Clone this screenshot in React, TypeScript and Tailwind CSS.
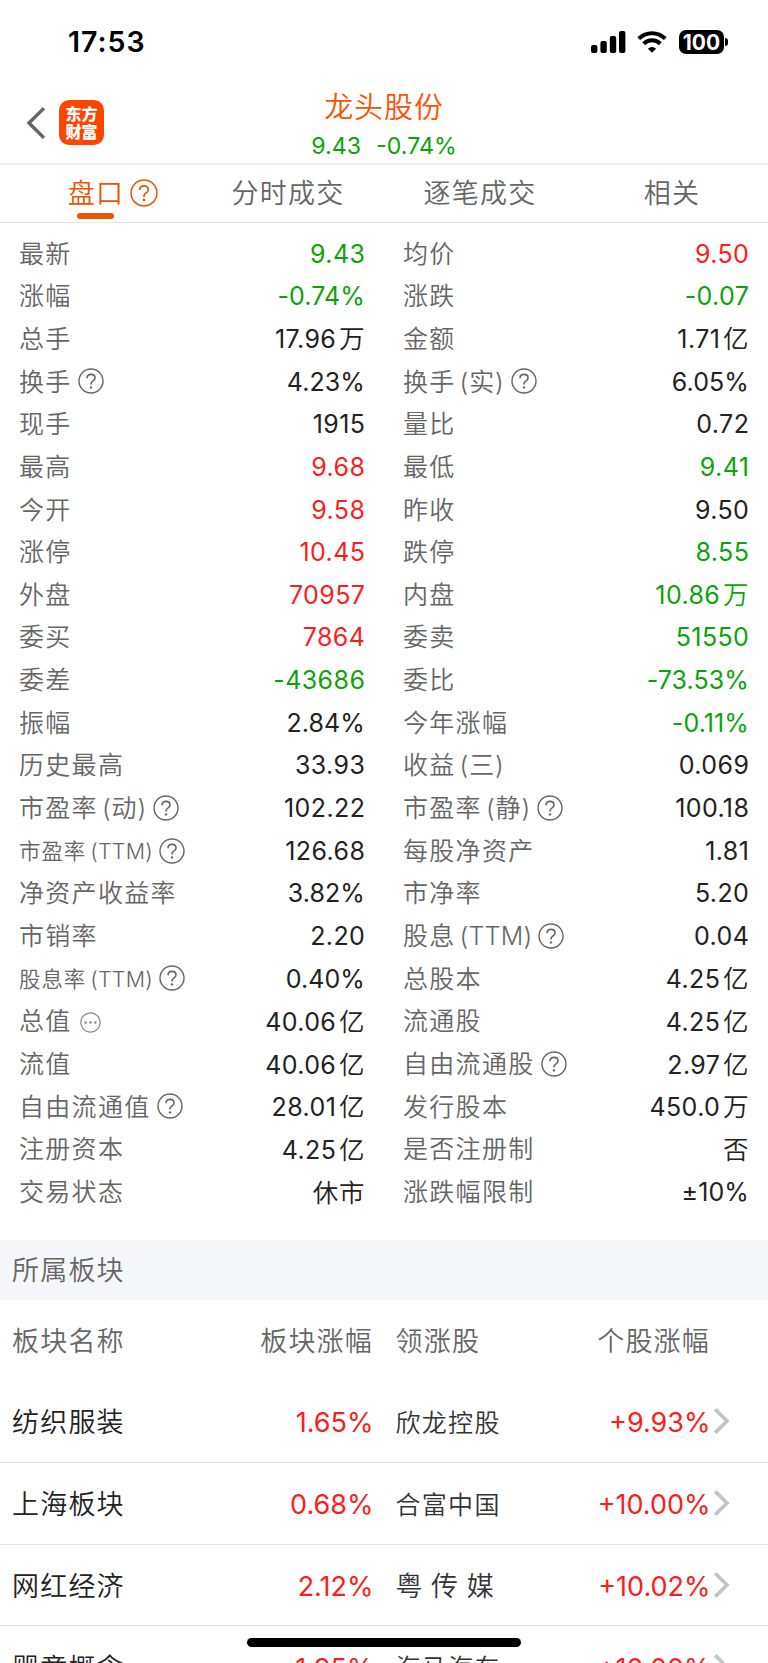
import { clsx } from 'clsx';

type Tone = 'up' | 'down' | 'flat';

interface Quote {
  label: string;
  value: string;
  unit?: string;
  tone?: Tone;
  suffix?: string;
  help?: boolean;
  more?: boolean;
  small?: boolean;
}

interface Sector {
  name: string;
  change: string;
  leader: string;
  leaderChange: string;
  spaced?: boolean;
}

const toneClass: Record<Tone, string> = {
  up: 'text-[#fd1c1c]',
  down: 'text-[#0aa30a]',
  flat: 'text-[#222222]',
};

const quotes: Quote[] = [
  { label: '最新', value: '9.43', tone: 'down' },
  { label: '均价', value: '9.50', tone: 'up' },
  { label: '涨幅', value: '-0.74%', tone: 'down' },
  { label: '涨跌', value: '-0.07', tone: 'down' },
  { label: '总手', value: '17.96', unit: '万' },
  { label: '金额', value: '1.71', unit: '亿' },
  { label: '换手', value: '4.23%', help: true },
  { label: '换手', suffix: '(实)', value: '6.05%', help: true },
  { label: '现手', value: '1915' },
  { label: '量比', value: '0.72' },
  { label: '最高', value: '9.68', tone: 'up' },
  { label: '最低', value: '9.41', tone: 'down' },
  { label: '今开', value: '9.58', tone: 'up' },
  { label: '昨收', value: '9.50' },
  { label: '涨停', value: '10.45', tone: 'up' },
  { label: '跌停', value: '8.55', tone: 'down' },
  { label: '外盘', value: '70957', tone: 'up' },
  { label: '内盘', value: '10.86', unit: '万', tone: 'down' },
  { label: '委买', value: '7864', tone: 'up' },
  { label: '委卖', value: '51550', tone: 'down' },
  { label: '委差', value: '-43686', tone: 'down' },
  { label: '委比', value: '-73.53%', tone: 'down' },
  { label: '振幅', value: '2.84%' },
  { label: '今年涨幅', value: '-0.11%', tone: 'down' },
  { label: '历史最高', value: '33.93' },
  { label: '收益', suffix: '(三)', value: '0.069' },
  { label: '市盈率', suffix: '(动)', value: '102.22', help: true },
  { label: '市盈率', suffix: '(静)', value: '100.18', help: true },
  { label: '市盈率', suffix: '(TTM)', value: '126.68', help: true, small: true },
  { label: '每股净资产', value: '1.81' },
  { label: '净资产收益率', value: '3.82%' },
  { label: '市净率', value: '5.20' },
  { label: '市销率', value: '2.20' },
  { label: '股息', suffix: '(TTM)', value: '0.04', help: true },
  { label: '股息率', suffix: '(TTM)', value: '0.40%', help: true, small: true },
  { label: '总股本', value: '4.25', unit: '亿' },
  { label: '总值', value: '40.06', unit: '亿', more: true },
  { label: '流通股', value: '4.25', unit: '亿' },
  { label: '流值', value: '40.06', unit: '亿' },
  { label: '自由流通股', value: '2.97', unit: '亿', help: true },
  { label: '自由流通值', value: '28.01', unit: '亿', help: true },
  { label: '发行股本', value: '450.0', unit: '万' },
  { label: '注册资本', value: '4.25', unit: '亿' },
  { label: '是否注册制', value: '', unit: '否' },
  { label: '交易状态', value: '', unit: '休市' },
  { label: '涨跌幅限制', value: '±10%' },
];

const sectors: Sector[] = [
  { name: '纺织服装', change: '1.65%', leader: '欣龙控股', leaderChange: '+9.93%' },
  { name: '上海板块', change: '0.68%', leader: '合富中国', leaderChange: '+10.00%' },
  { name: '网红经济', change: '2.12%', leader: '粤传媒', leaderChange: '+10.02%', spaced: true },
  { name: '婴童概念', change: '1.95%', leader: '海马汽车', leaderChange: '+10.00%' },
];

const tabs = ['盘口', '分时成交', '逐笔成交', '相关'];

function HelpIcon({ className }: { className?: string }) {
  return (
    <svg viewBox="0 0 26 26" fill="none" stroke="currentColor" className={clsx('shrink-0', className)}>
      <circle cx="13" cy="13" r="12" strokeWidth="1.4" />
      <path d="M9 10.2C9.1 7.8 10.8 6.4 13 6.4s4 1.4 4 3.5c0 1.6-.9 2.4-2.2 3.2-1.3.8-1.8 1.5-1.8 2.9v.6" strokeWidth="1.6" />
      <circle cx="13" cy="19.4" r="1.2" fill="currentColor" stroke="none" />
    </svg>
  );
}

function MoreIcon() {
  return (
    <svg viewBox="0 0 20 20" className="ml-2 mt-[3px] size-[21px] shrink-0 text-[#888888]">
      <circle cx="10" cy="10" r="9.2" fill="none" stroke="currentColor" strokeWidth="1.2" />
      <circle cx="5.4" cy="10" r="1.2" fill="currentColor" />
      <circle cx="10" cy="10" r="1.2" fill="currentColor" />
      <circle cx="14.6" cy="10" r="1.2" fill="currentColor" />
    </svg>
  );
}

function StatusBar() {
  return (
    <div className="flex h-[84px] shrink-0 items-center justify-between pl-[68px] pr-10 text-black">
      <span className="pt-px text-[28.5px] font-semibold leading-none tracking-[1px]">17:53</span>
      <div className="flex items-center">
        <svg viewBox="0 0 35 22" className="h-[22px] w-[35px]" fill="currentColor">
          <rect x="0" y="14" width="6.4" height="8" rx="2" />
          <rect x="9.4" y="10" width="6.4" height="12" rx="2" />
          <rect x="18.8" y="5" width="6.4" height="17" rx="2" />
          <rect x="28" y="0" width="6.4" height="22" rx="2" />
        </svg>
        <svg viewBox="0 0 30 22" className="ml-[11px] h-[22px] w-[30px]" fill="none" stroke="currentColor" strokeWidth="4">
          <path d="M1.7 7.6a19 19 0 0 1 26.6 0" />
          <path d="M6.7 12.7a12 12 0 0 1 16.6 0" />
          <path d="M15 21.8l-4.1-4.1a5.8 5.8 0 0 1 8.2 0z" fill="currentColor" stroke="none" />
        </svg>
        <div className="ml-3 flex h-6 w-[45px] items-center justify-center rounded-[7px] bg-black text-[21px] font-bold leading-none text-white">
          100
        </div>
        <div className="ml-px h-2 w-[3px] rounded-r-full bg-black" />
      </div>
    </div>
  );
}

function Header() {
  return (
    <div className="grid h-[81px] shrink-0 grid-cols-3 border-b-2 border-[#ececec]">
      <div className="flex items-start pl-[27px] pt-4">
        <svg viewBox="0 0 18 32" className="mt-[7px] h-8 w-[18px]" fill="none" stroke="#666666" strokeWidth="3.4">
          <path d="M17 1.2L2 16l15 14.8" />
        </svg>
        <div className="ml-[14px] flex size-[45px] flex-col items-center justify-center rounded-[10px] bg-[#ff4400] text-[16px] font-black leading-[18px] text-white">
          <span>东方</span>
          <span>财富</span>
        </div>
      </div>
      <div className="flex flex-col items-center">
        <div className="mt-[5px] text-[29px] font-[350] leading-[38px] tracking-[0.9px] text-[#ff5000]">龙头股份</div>
        <div className="mt-0.5 flex gap-[15px] text-[23.2px] leading-[34px] text-[#0aa30a]">
          <span>9.43</span>
          <span>-0.74%</span>
        </div>
      </div>
    </div>
  );
}

function Tabs() {
  return (
    <div className="grid h-[58px] shrink-0 grid-cols-4 border-b border-[#e6e6e6]">
      {tabs.map((tab, i) => (
        <div
          key={tab}
          className={clsx('flex justify-center pt-[9px] text-[27px] font-[350] leading-[40px] tracking-[1.2px]', i === 0 ? 'text-[#ea5504]' : 'text-[#666666]')}
        >
          <div className="relative h-fit">
            {tab}
            {i === 0 && (
              <>
                <HelpIcon className="absolute left-[62px] top-[5px] size-[28px]" />
                <span className="absolute left-[9.5px] top-[39px] h-[6px] w-[37px] rounded-full bg-[#ea5504]" />
              </>
            )}
          </div>
        </div>
      ))}
    </div>
  );
}

function QuoteCell({ quote }: { quote: Quote }) {
  const isPercent = quote.value.endsWith('%');

  return (
    <div className="flex h-[42.667px] items-center justify-between">
      <div className="flex items-center text-[#666666]">
        <span className={clsx('pt-0.5 font-[350]', quote.small ? 'text-[21.5px] tracking-[0.9px]' : 'text-[25px] tracking-[1.3px]')}>{quote.label}</span>
        {quote.suffix && (
          <span
            className={clsx(
              'ml-1 pt-0.5 font-[350]',
              quote.small ? 'text-[21.5px]' : 'text-[25px]',
              quote.suffix === '(TTM)' ? 'tracking-[0.2px]' : 'tracking-[0.9px]'
            )}
          >
            {quote.suffix}
          </span>
        )}
        {quote.help && <HelpIcon className="ml-1.5 size-[26px]" />}
        {quote.more && <MoreIcon />}
      </div>
      <div className={clsx('flex items-baseline pt-0.5 text-[25px]', toneClass[quote.tone || 'flat'])}>
        {quote.value && <span className={isPercent ? '-mr-[0.5px] tracking-[0.1px]' : '-mr-[0.8px] tracking-[0.4px]'}>{quote.value}</span>}
        {quote.unit && <span className="-mr-[0.8px] ml-[3.5px] text-[25.5px] font-[350] tracking-[0.8px]">{quote.unit}</span>}
      </div>
    </div>
  );
}

function SectorRow({ sector }: { sector: Sector }) {
  return (
    <div className="grid h-[81.8px] shrink-0 grid-cols-[373px_337px_1fr] items-center border-b border-[#e4e6ea] text-[27px]">
      <div className="flex items-center justify-between pl-3 pt-1">
        <span className="font-[350] tracking-[1.2px] text-[#222222]">{sector.name}</span>
        <span className="-mr-[0.5px] text-[#fd1c1c]">{sector.change}</span>
      </div>
      <div className="flex items-center justify-between pl-[22.5px] pt-1">
        <span className={clsx('font-[350] text-[#333333]', sector.spaced ? 'text-[27px] tracking-[8.6px]' : 'text-[25px] tracking-[1.3px]')}>
          {sector.leader}
        </span>
        <span className="-mr-[0.5px] text-[#fd1c1c]">{sector.leaderChange}</span>
      </div>
      <svg viewBox="0 0 16 26" className="ml-1 h-[26px] w-4" fill="none" stroke="#c4c4c6" strokeWidth="3.6">
        <path d="M1.2 1.4L13 13L1.2 24.6" />
      </svg>
    </div>
  );
}

export default function App() {
  return (
    <div className="relative flex h-[1663px] w-[768px] flex-col overflow-hidden bg-white font-['Inter','Noto_Sans_CJK_SC',sans-serif]">
      <StatusBar />
      <Header />
      <Tabs />

      <div className="grid shrink-0 grid-cols-2 gap-x-[38.5px] pl-[19px] pr-[19.5px] pt-[9px]">
        {quotes.map((q, i) => (
          <QuoteCell key={i} quote={q} />
        ))}
      </div>

      <div className="mt-[27px] flex h-[59.5px] shrink-0 items-center bg-[#f6f7fa] pl-3 pt-[3px] text-[27px] font-[350] tracking-[1.2px] text-[#666666]">
        所属板块
      </div>

      <div className="grid h-[81.5px] shrink-0 grid-cols-[373px_337px] items-center pt-1 text-[27px] font-[350] tracking-[1.2px] text-[#666666]">
        <div className="flex justify-between pl-3">
          <span>板块名称</span>
          <span>板块涨幅</span>
        </div>
        <div className="flex justify-between pl-[22.5px]">
          <span>领涨股</span>
          <span>个股涨幅</span>
        </div>
      </div>
      {sectors.map(s => (
        <SectorRow key={s.name} sector={s} />
      ))}

      {/* Home indicator */}
      <div className="absolute bottom-4 left-[247px] h-[9px] w-[274px] rounded-full bg-black" />
    </div>
  );
}
